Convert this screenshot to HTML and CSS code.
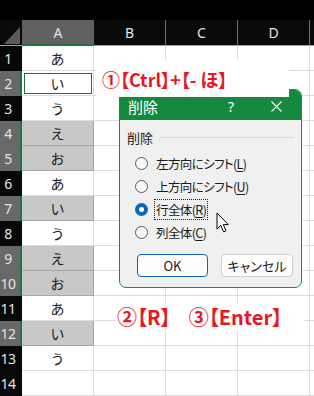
FILE: index.html
```html
<!DOCTYPE html>
<html lang="ja">
<head>
    <meta charset="utf-8">
    <title>削除</title>
    <link rel="stylesheet" href="styles.css">
</head>
<body>
<div class="screen">
    <div class="topbar"></div>

    <div class="sheet">
        <div class="row head">
            <div class="corner">
                <svg width="16" height="17" viewBox="0 0 16 17"><polygon points="16,0 16,17 0,17" fill="#5a5a5a"/></svg>
            </div>
            <div class="colhead sel">A</div>
            <div class="colhead">B</div>
            <div class="colhead">C</div>
            <div class="colhead">D</div>
            <div class="colhead"></div>
        </div>

        <div class="row"><div class="rowhead">1</div><div class="cell">あ</div><div class="cell"></div><div class="cell"></div><div class="cell"></div><div class="cell"></div></div>
        <div class="row"><div class="rowhead sel">2</div><div class="cell active">い</div><div class="cell"></div><div class="cell"></div><div class="cell"></div><div class="cell"></div></div>
        <div class="row"><div class="rowhead">3</div><div class="cell">う</div><div class="cell"></div><div class="cell"></div><div class="cell"></div><div class="cell"></div></div>
        <div class="row"><div class="rowhead sel">4</div><div class="cell sel">え</div><div class="cell"></div><div class="cell"></div><div class="cell"></div><div class="cell"></div></div>
        <div class="row"><div class="rowhead sel">5</div><div class="cell sel">お</div><div class="cell"></div><div class="cell"></div><div class="cell"></div><div class="cell"></div></div>
        <div class="row"><div class="rowhead">6</div><div class="cell">あ</div><div class="cell"></div><div class="cell"></div><div class="cell"></div><div class="cell"></div></div>
        <div class="row"><div class="rowhead sel">7</div><div class="cell sel">い</div><div class="cell"></div><div class="cell"></div><div class="cell"></div><div class="cell"></div></div>
        <div class="row"><div class="rowhead">8</div><div class="cell">う</div><div class="cell"></div><div class="cell"></div><div class="cell"></div><div class="cell"></div></div>
        <div class="row"><div class="rowhead sel">9</div><div class="cell sel">え</div><div class="cell"></div><div class="cell"></div><div class="cell"></div><div class="cell"></div></div>
        <div class="row"><div class="rowhead sel">10</div><div class="cell sel">お</div><div class="cell"></div><div class="cell"></div><div class="cell"></div><div class="cell"></div></div>
        <div class="row"><div class="rowhead">11</div><div class="cell">あ</div><div class="cell"></div><div class="cell"></div><div class="cell"></div><div class="cell"></div></div>
        <div class="row"><div class="rowhead sel">12</div><div class="cell sel">い</div><div class="cell"></div><div class="cell"></div><div class="cell"></div><div class="cell"></div></div>
        <div class="row"><div class="rowhead">13</div><div class="cell">う</div><div class="cell"></div><div class="cell"></div><div class="cell"></div><div class="cell"></div></div>
        <div class="row"><div class="rowhead">14</div><div class="cell"></div><div class="cell"></div><div class="cell"></div><div class="cell"></div><div class="cell"></div></div>
    </div>

    <!-- annotations over the sheet -->
    <div class="note note1">①【Ctrl】+【- ほ】</div>

    <div class="dialog">
        <div class="dlg-title">
            <span class="dlg-name">削除</span>
            <span class="dlg-help">?</span>
            <span class="dlg-close">
                <svg width="11" height="11" viewBox="0 0 11 11"><path d="M0.5 0.5 L10.5 10.5 M10.5 0.5 L0.5 10.5" stroke="#fff" stroke-width="1.1"/></svg>
            </span>
        </div>
        <div class="dlg-body">
            <div class="group">
                <span>削除</span>
                <span class="group-line"></span>
            </div>
            <div class="options">
                <div class="opt"><span class="radio"></span><span class="lbl">左方向にシフト(<u>L</u>)</span></div>
                <div class="opt"><span class="radio"></span><span class="lbl">上方向にシフト(<u>U</u>)</span></div>
                <div class="opt"><span class="radio on"></span><span class="lbl focus">行全体(<u>R</u>)</span></div>
                <div class="opt"><span class="radio"></span><span class="lbl">列全体(<u>C</u>)</span></div>
            </div>
            <div class="buttons">
                <button class="btn ok">OK</button>
                <button class="btn">キャンセル</button>
            </div>
        </div>
    </div>

    <svg class="cursor" width="14" height="22" viewBox="0 0 14 22">
        <path d="M1 1 L1 17 L4.8 13.4 L7.6 19.8 L10 18.8 L7.3 12.6 L12.3 12.6 Z" fill="#fff" stroke="#000" stroke-width="1" stroke-linejoin="round"/>
    </svg>

    <div class="note note2"><span>②【R】</span><span>③【Enter】</span></div>
</div>
</body>
</html>
```

FILE: styles.css
```css
body{
    margin: 0;
    background: #fff;
    font-family: "Noto Sans CJK JP", "Noto Sans", sans-serif;
}

.screen{
    position: relative;
    width: 314px;
    height: 396px;
    overflow: hidden;
    background: #fff;
}

.topbar{
    height: 20px;
    background: #000;
}

.row{
    display: grid;
    grid-template-columns: 22px 72px 72px 72px 72px 72px;
    height: 25px;
}

.row.head{
    height: 26px;
    background: #0a0a0a;
    border-bottom: 1px solid #9d9d9d;
    box-sizing: border-box;
}

.corner{
    display: flex;
    align-items: flex-end;
    justify-content: flex-end;
    padding: 0 2px 1px 0;
}

.colhead{
    display: flex;
    align-items: center;
    justify-content: center;
    color: #e4e4e4;
    font-family: "Noto Sans", sans-serif;
    font-size: 14px;
    border-right: 1px solid #6e6e6e;
    box-sizing: border-box;
}

.colhead.sel{
    background: #606060;
    border-bottom: 2px solid #1d7444;
    border-right: none;
    margin-bottom: -1px;
}

.rowhead{
    background: #080808;
    color: #e4e4e4;
    font-family: "Noto Sans", sans-serif;
    font-size: 14px;
    line-height: 25px;
    padding-right: 6px;
    text-align: center;
    letter-spacing: -0.5px;
}

.rowhead.sel{
    background: #686868;
    border-right: 2px solid #1d7444;
    padding-right: 4px;
}

.cell{
    border-right: 1px solid #dcdcdc;
    border-bottom: 1px solid #dcdcdc;
    box-sizing: border-box;
    font-size: 14px;
    color: #202020;
    text-align: center;
    line-height: 24px;
}

.cell.sel{
    background: #c8c8c8;
    border-right-color: #a4a4a4;
    border-bottom-color: #a8a8a8;
}

.cell.active{
    outline: 1px solid #1e6f44;
    outline-offset: -3px;
}

.note{
    position: absolute;
    background: #fff;
    color: #e8161f;
    font-weight: bold;
    font-feature-settings: "palt";
    white-space: nowrap;
}

.note1{
    left: 96px;
    top: 60px;
    width: 193px;
    height: 37px;
    font-size: 18px;
    line-height: 38px;
    padding-left: 6px;
    box-sizing: border-box;
    z-index: 1;
}

.note2{
    left: 116px;
    top: 303px;
    width: 188px;
    height: 27px;
    font-size: 20px;
    line-height: 27px;
    display: flex;
    gap: 18px;
    padding-left: 1px;
    box-sizing: border-box;
}

.dialog{
    position: absolute;
    left: 119px;
    top: 89px;
    width: 183px;
    height: 199px;
    box-sizing: border-box;
    border: 1px solid #1d8a40;
    border-radius: 7px;
    overflow: hidden;
    background: #f0f0f0;
}

.dlg-title{
    height: 30px;
    background: #158a3f;
    color: #fff;
    display: flex;
    align-items: center;
    font-size: 15px;
    padding-left: 8px;
    padding-top: 3px;
    box-sizing: border-box;
}

.dlg-name{
    flex: 1;
}

.dlg-help{
    font-family: "Noto Sans", sans-serif;
    font-size: 14px;
    margin-right: 37px;
}

.dlg-close{
    display: flex;
    margin-right: 19px;
}

.dlg-body{
    padding: 9px 7px 0 7px;
    font-size: 13px;
    color: #1a1a1a;
}

.group{
    display: flex;
    align-items: center;
    height: 16px;
    gap: 6px;
}

.group-line{
    flex: 1;
    height: 1px;
    background: #d6d6d6;
}

.options{
    margin-top: 7px;
    padding-left: 8px;
}

.opt{
    display: flex;
    align-items: center;
    height: 23px;
    font-size: 12.5px;
    letter-spacing: -0.6px;
    font-feature-settings: "palt";
}

.radio{
    width: 13px;
    height: 13px;
    box-sizing: border-box;
    border: 1px solid #5c5c5c;
    border-radius: 50%;
    background: #f7f7f7;
    margin-right: 6px;
}

.radio.on{
    border: 4px solid #0a66b8;
    background: #fff;
}

.lbl{
    padding: 0 1px;
    border: 1px dotted transparent;
}

.lbl.focus{
    border-color: #222;
}

.lbl u{
    text-underline-offset: 2px;
}

.buttons{
    display: flex;
    gap: 13px;
    margin-top: 10px;
    padding-left: 10px;
}

.btn{
    width: 72px;
    height: 23px;
    border: 1px solid #cfcfcf;
    border-radius: 4px;
    background: #fdfdfd;
    font-family: "Noto Sans CJK JP", "Noto Sans", sans-serif;
    font-size: 13px;
    color: #1a1a1a;
    padding: 0;
    font-feature-settings: "palt";
}

.btn.ok{
    width: 71px;
    border-color: #0a66b8;
}

.cursor{
    position: absolute;
    left: 216px;
    top: 212px;
}
```
